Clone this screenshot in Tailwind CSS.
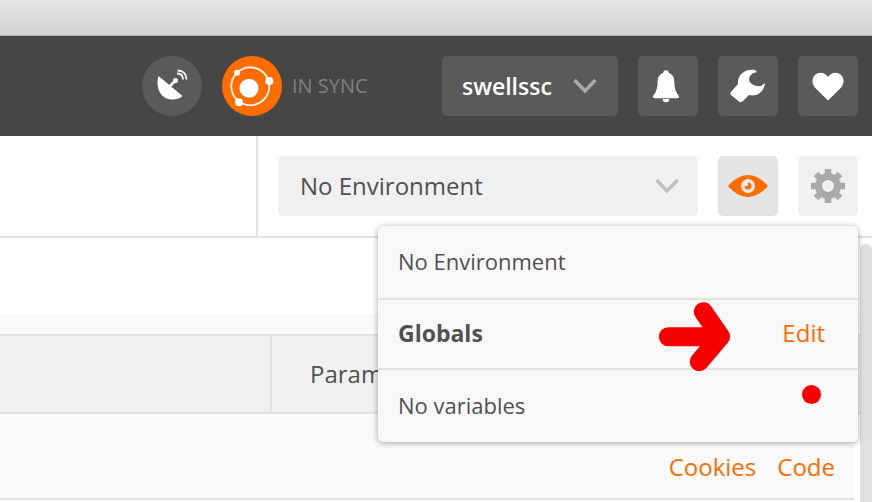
<!DOCTYPE html>
<html lang="en">
<head>
    <meta charset="UTF-8" />
    <title>Postman</title>
    <script src="https://cdn.jsdelivr.net/npm/@tailwindcss/browser@4"></script>
</head>
<body class="w-[872px] h-[502px] overflow-hidden relative bg-white font-['Open_Sans',sans-serif] text-[#505050]">

<!-- Window title bar -->
<div class="h-[36px] bg-gradient-to-b from-[#e8e6e8] to-[#d2d0d2] border-b border-[#b4b2b4]"></div>

<!-- Dark header -->
<header class="h-[100px] bg-[#464646] flex items-center pl-[142px] pr-[14px]">
    <div class="w-[60px] h-[60px] rounded-full bg-[#5a5a5a] flex items-center justify-center">
        <svg width="34" height="34" viewBox="0 0 34 34" fill="#fff">
            <path d="M3.500 7 C1 14 3 24 9 28 C15 32 24 31 27.500 27 Z"/>
            <path d="M14 18 L20 12" stroke="#fff" stroke-width="2.500"/>
            <circle cx="20.500" cy="11.500" r="2.500"/>
            <path d="M22 4.500 C26 4.500 28 7 28 10.500 M22.500 1.500 C28 1.500 31.500 5 31.500 10.500" fill="none" stroke="#fff" stroke-width="1.800"/>
        </svg>
    </div>
    <div class="w-[60px] h-[60px] rounded-full bg-[#ff6c00] ml-[20px] flex items-center justify-center">
        <svg width="60" height="60" viewBox="0 0 60 60" fill="#fff">
            <circle cx="28.300" cy="30.300" r="19" fill="none" stroke="#fff" stroke-width="1.800"/>
            <circle cx="27" cy="32.300" r="9.500"/>
            <circle cx="15" cy="16.700" r="3"/>
            <circle cx="47.300" cy="25" r="4"/>
            <circle cx="17" cy="46.300" r="4"/>
        </svg>
    </div>
    <span class="ml-[10px] w-[75px] text-[20px] text-[#7f7f7f] whitespace-nowrap">IN SYNC</span>

    <button class="ml-[75px] w-[176px] h-[60px] rounded-[5px] bg-[#5a5a5a] flex items-center pl-[20px] text-white text-[23px] font-semibold">
        swellssc
        <svg class="ml-[21px]" width="24" height="16" viewBox="0 0 24 16" fill="none" stroke="#a9a9a9" stroke-width="3.500"><path d="M1.500 2 L12 13 L22.500 2"/></svg>
    </button>
    <button class="ml-[20px] w-[60px] h-[60px] rounded-[5px] bg-[#5a5a5a] flex items-center justify-center pr-[4px]">
        <svg width="28" height="34" viewBox="0 0 30 36" fill="#fff">
            <path d="M15 1 C17 1 18 2.500 18 4 C22 5 24 9 24 14 C24 21 26 25 29 29 Q29.500 31 27 31 L3 31 Q0.500 31 1 29 C4 25 6 21 6 14 C6 9 8 5 12 4 C12 2.500 13 1 15 1 Z"/>
            <path d="M11.500 32 L18.500 32 C18.500 35 16.500 35.500 15 35.500 C13.500 35.500 11.500 35 11.500 32 Z"/>
        </svg>
    </button>
    <button class="ml-[20px] w-[60px] h-[60px] rounded-[5px] bg-[#5a5a5a] flex items-center justify-center">
        <svg width="36" height="34" viewBox="0 0 36 34" fill="#fff">
            <path d="M25 1 C15 -1 7 6 8 15 L1 23 Q-0.500 25 1 26 L9 32.500 Q11 34 13 32 L19 26 C27 28 34 23 35 14 L31 17 C26 18 19 15 19 10 C20 6 22 4 27 3 Z"/>
        </svg>
    </button>
    <button class="ml-[20px] w-[60px] h-[60px] rounded-[5px] bg-[#5a5a5a] flex items-center justify-center">
        <svg width="32" height="29" viewBox="0 0 34 30" fill="#fff">
            <path d="M17 30 L3 16 C-1 11 0 4 5 1.500 C10 -1 14.500 1 17 5 C19.500 1 24 -1 29 1.500 C34 4 35 11 31 16 Z"/>
        </svg>
    </button>
</header>

<!-- Environment bar -->
<div class="h-[102px] border-b-2 border-[#e2e2e2] flex justify-end">
    <div class="w-[616px] border-l-2 border-[#e2e2e2] flex items-start pt-[20px] pl-[20px] pr-[14px]">
        <div class="w-[420px] h-[60px] rounded-[5px] bg-[#f0f0f0] flex items-center justify-between pl-[22px] pr-[19px] text-[24px] text-[#505050]">
            No Environment
            <svg width="24" height="16" viewBox="0 0 24 16" fill="none" stroke="#c0c0c0" stroke-width="3.500"><path d="M1.500 2 L12 13 L22.500 2"/></svg>
        </div>
        <button class="ml-[20px] w-[60px] h-[60px] rounded-[5px] bg-[#e4e4e4] flex items-center justify-center">
            <svg width="40" height="22" viewBox="0 0 40 22">
                <path d="M0 11 C6 4 13 0 20 0 C27 0 34 4 40 11 C34 18 27 22 20 22 C13 22 6 18 0 11 Z" fill="#ff6c00"/>
                <circle cx="20" cy="11" r="7" fill="#e8e8e8"/>
                <path d="M20 7.500 A3.500 3.500 0 1 1 16.500 11 L20 11 Z" fill="#ff6c00"/>
            </svg>
        </button>
        <button class="ml-[20px] w-[60px] h-[60px] rounded-[5px] bg-[#f0f0f0] flex items-center justify-center">
            <svg width="36" height="36" viewBox="0 0 36 36" fill="#a9a9a9">
                <circle cx="18" cy="18" r="9.500" fill="none" stroke="#a9a9a9" stroke-width="7"/>
                <g stroke="#a9a9a9" stroke-width="6.500">
                    <path d="M18 1 V7 M18 29 V35 M1 18 H7 M29 18 H35 M6 6 L10 10 M26 26 L30 30 M30 6 L26 10 M10 26 L6 30"/>
                </g>
            </svg>
        </button>
    </div>
</div>

<!-- Request area -->
<div class="h-[76px] bg-white"></div>
<div class="h-[20px] bg-[#fafafa]"></div>
<div class="h-[80px] bg-[#f0f0f0] border-y-2 border-[#e2e2e2] flex">
    <div class="w-[270px] border-r-2 border-[#e2e2e2] box-content"></div>
    <div class="pl-[38px] flex items-center text-[24px] text-[#505050]">Params</div>
</div>
<div class="h-[86px] w-[854px] bg-[#fafafa] border-b-2 border-[#e2e2e2] flex justify-end items-start pt-[35px] pr-[19px] gap-[21px] text-[24px] text-[#ff6c00]">
    <a href="#">Cookies</a>
    <a href="#">Code</a>
</div>

<!-- Scroll track -->
<div class="absolute left-[860px] top-[244px] w-[12px] h-[258px] bg-[#e0e0e0] rounded-t-[6px]"></div>

<!-- Environment quick look -->
<div class="absolute left-[378px] top-[226px] w-[480px] h-[216px] rounded-[5px] bg-[#f8f8f8] shadow-[0_1px_6px_rgba(0,0,0,0.35)] flex flex-col text-[22px] text-[#505050]">
    <div class="h-[72px] flex items-center pl-[20px] pb-[2px]">No Environment</div>
    <div class="h-[72px] border-y-2 border-[#e2e2e2] flex items-center justify-between pl-[20px] pr-[33px] pb-[2px]">
        <span class="font-bold text-[23px]">Globals</span>
        <a href="#" class="text-[#ff6c00] text-[24px]">Edit</a>
    </div>
    <div class="flex-1 flex items-center pl-[20px] pb-[2px]">No variables</div>
</div>

<!-- Red annotation arrow and dot -->
<svg class="absolute left-[655px] top-[298px]" width="80" height="76" viewBox="0 0 80 76" fill="none" stroke="#f70000" stroke-width="19" stroke-linecap="round" stroke-linejoin="round">
    <path d="M13.300 38.700 H65.500 M48.300 13.700 L65.500 38.700 L44.300 63.700"/>
</svg>
<div class="absolute left-[802px] top-[385px] w-[19px] h-[19px] rounded-full bg-[#f70000]"></div>

</body>
</html>
